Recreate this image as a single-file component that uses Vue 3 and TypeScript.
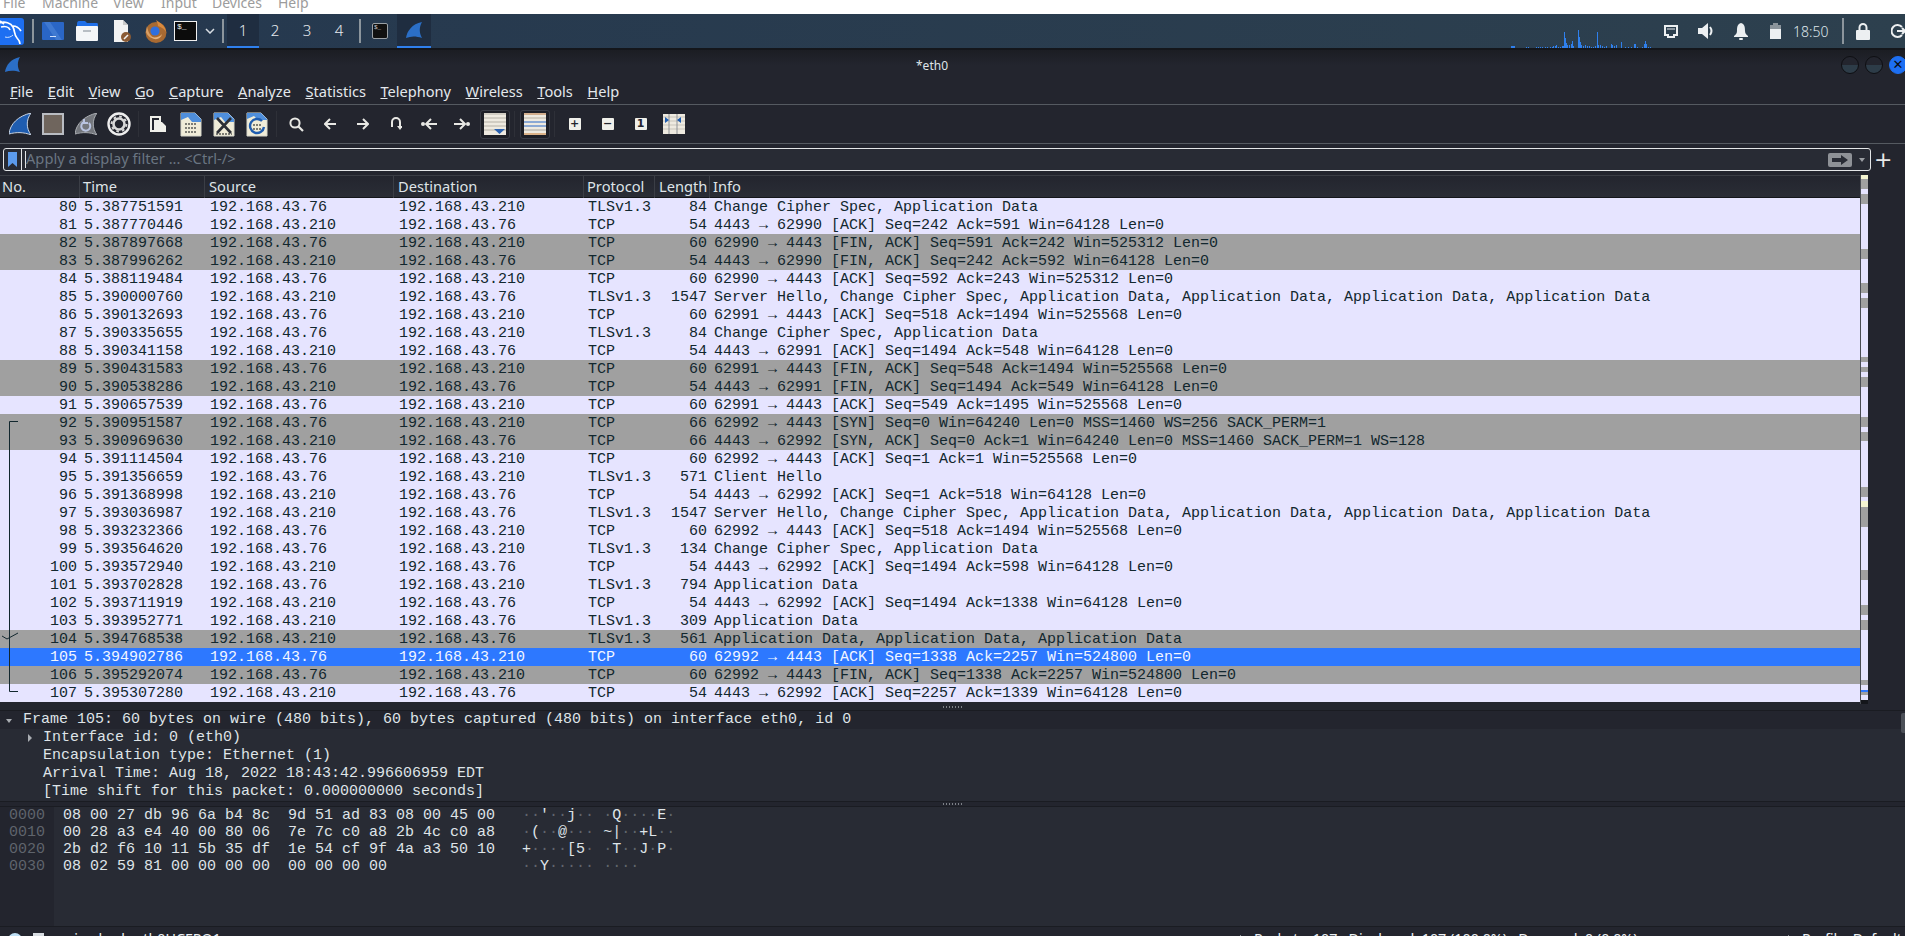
<script setup lang="ts">
interface Packet {
  no: string
  time: string
  source: string
  destination: string
  protocol: string
  length: string
  info: string
  kind: string
}

const NET = '192.168.43.'
const rawRows = [
  '80|5.387751591|76|210|TLSv1.3|84|Change Cipher Spec, Application Data',
  '81|5.387770446|210|76|TCP|54|4443 → 62990 [ACK] Seq=242 Ack=591 Win=64128 Len=0',
  '82|5.387897668|76|210|TCP|60|62990 → 4443 [FIN, ACK] Seq=591 Ack=242 Win=525312 Len=0',
  '83|5.387996262|210|76|TCP|54|4443 → 62990 [FIN, ACK] Seq=242 Ack=592 Win=64128 Len=0',
  '84|5.388119484|76|210|TCP|60|62990 → 4443 [ACK] Seq=592 Ack=243 Win=525312 Len=0',
  '85|5.390000760|210|76|TLSv1.3|1547|Server Hello, Change Cipher Spec, Application Data, Application Data, Application Data, Application Data',
  '86|5.390132693|76|210|TCP|60|62991 → 4443 [ACK] Seq=518 Ack=1494 Win=525568 Len=0',
  '87|5.390335655|76|210|TLSv1.3|84|Change Cipher Spec, Application Data',
  '88|5.390341158|210|76|TCP|54|4443 → 62991 [ACK] Seq=1494 Ack=548 Win=64128 Len=0',
  '89|5.390431583|76|210|TCP|60|62991 → 4443 [FIN, ACK] Seq=548 Ack=1494 Win=525568 Len=0',
  '90|5.390538286|210|76|TCP|54|4443 → 62991 [FIN, ACK] Seq=1494 Ack=549 Win=64128 Len=0',
  '91|5.390657539|76|210|TCP|60|62991 → 4443 [ACK] Seq=549 Ack=1495 Win=525568 Len=0',
  '92|5.390951587|76|210|TCP|66|62992 → 4443 [SYN] Seq=0 Win=64240 Len=0 MSS=1460 WS=256 SACK_PERM=1',
  '93|5.390969630|210|76|TCP|66|4443 → 62992 [SYN, ACK] Seq=0 Ack=1 Win=64240 Len=0 MSS=1460 SACK_PERM=1 WS=128',
  '94|5.391114504|76|210|TCP|60|62992 → 4443 [ACK] Seq=1 Ack=1 Win=525568 Len=0',
  '95|5.391356659|76|210|TLSv1.3|571|Client Hello',
  '96|5.391368998|210|76|TCP|54|4443 → 62992 [ACK] Seq=1 Ack=518 Win=64128 Len=0',
  '97|5.393036987|210|76|TLSv1.3|1547|Server Hello, Change Cipher Spec, Application Data, Application Data, Application Data, Application Data',
  '98|5.393232366|76|210|TCP|60|62992 → 4443 [ACK] Seq=518 Ack=1494 Win=525568 Len=0',
  '99|5.393564620|76|210|TLSv1.3|134|Change Cipher Spec, Application Data',
  '100|5.393572940|210|76|TCP|54|4443 → 62992 [ACK] Seq=1494 Ack=598 Win=64128 Len=0',
  '101|5.393702828|76|210|TLSv1.3|794|Application Data',
  '102|5.393711919|210|76|TCP|54|4443 → 62992 [ACK] Seq=1494 Ack=1338 Win=64128 Len=0',
  '103|5.393952771|210|76|TLSv1.3|309|Application Data',
  '104|5.394768538|210|76|TLSv1.3|561|Application Data, Application Data, Application Data',
  '105|5.394902786|76|210|TCP|60|62992 → 4443 [ACK] Seq=1338 Ack=2257 Win=524800 Len=0',
  '106|5.395292074|76|210|TCP|60|62992 → 4443 [FIN, ACK] Seq=1338 Ack=2257 Win=524800 Len=0',
  '107|5.395307280|210|76|TCP|54|4443 → 62992 [ACK] Seq=2257 Ack=1339 Win=64128 Len=0',
]

const greyRows = ['82', '83', '89', '90', '92', '93', '104', '106']

const packets: Packet[] = rawRows.map((line) => {
  const [no, time, src, dst, protocol, length, info] = line.split('|')
  return {
    no,
    time,
    source: NET + src,
    destination: NET + dst,
    protocol,
    length,
    info,
    kind: no === '105' ? 'selected' : greyRows.includes(no) ? 'grey' : 'light',
  }
})

const menus = ['File', 'Edit', 'View', 'Go', 'Capture', 'Analyze', 'Statistics', 'Telephony', 'Wireless', 'Tools', 'Help']
const vmMenus = ['File', 'Machine', 'View', 'Input', 'Devices', 'Help']

// scrollbar minimap, [height, colour kind]
const minimap: [number, string][] = [
  [4, 'y'], [10, 'g'], [5, 'l'], [10, 'g'], [45, 'l'], [10, 'g'], [24, 'l'], [10, 'g'], [5, 'l'], [10, 'g'],
  [49, 'l'], [5, 'g'], [5, 'l'], [5, 'g'], [5, 'l'], [10, 'g'], [30, 'l'], [10, 'g'], [5, 'l'], [9, 'g'],
  [46, 'l'], [10, 'g'], [4, 'l'], [6, 'y'], [20, 'g'], [43, 'l'], [10, 'g'], [25, 'l'], [10, 'g'], [5, 'l'],
  [10, 'g'], [50, 'l'], [5, 'g'], [5, 'l'], [2, 'b'], [3, 'g'], [5, 'l'], [4, 'd'],
]

// network monitor bars, [x, height]
const netBars: [number, number][] = [
  [0, 2], [1, 2], [2, 2], [3, 2], [15, 1], [17, 1], [25, 1], [27, 1], [29, 1], [31, 1], [34, 1], [36, 1], [39, 1],
  [41, 1], [42, 2], [44, 2], [45, 3], [47, 1], [49, 1], [51, 2], [52, 2], [53, 16], [54, 10], [55, 5], [56, 3],
  [58, 3], [60, 4], [61, 7], [62, 2], [67, 18], [68, 11], [69, 6], [70, 3], [72, 2], [74, 3], [76, 2], [78, 2],
  [80, 1], [82, 1], [84, 2], [86, 16], [87, 3], [89, 3], [91, 2], [93, 1], [95, 2], [100, 4], [101, 3], [103, 2], [105, 3],
  [110, 6], [114, 1], [117, 1], [120, 1], [123, 4], [124, 4], [126, 1], [131, 1], [133, 4], [134, 7], [135, 4], [137, 1], [139, 1],
]

const hexRows = [
  { off: '0000', hex: '08 00 27 db 96 6a b4 8c  9d 51 ad 83 08 00 45 00', ascii: "··'··j·· ·Q····E·" },
  { off: '0010', hex: '00 28 a3 e4 40 00 80 06  7e 7c c0 a8 2b 4c c0 a8', ascii: '·(··@··· ~|··+L··' },
  { off: '0020', hex: '2b d2 f6 10 11 5b 35 df  1e 54 cf 9f 4a a3 50 10', ascii: '+····[5· ·T··J·P·' },
  { off: '0030', hex: '08 02 59 81 00 00 00 00  00 00 00 00', ascii: '··Y····· ····' },
]
</script>

<template>
  <div class="screen">
    <div class="vm-menu">
      <span v-for="m in vmMenus" :key="m" :class="'vm-' + m.toLowerCase()">{{ m }}</span>
    </div>

    <div class="panel">
      <div class="kali">
        <svg width="24" height="27" viewBox="0 0 24 27">
          <rect x="-6" y="0" width="30" height="27" rx="3" fill="#1d6ff2" />
          <path d="M-1 5 C5 3 11 5 13 9 C15 13 14 17 17 20 C19 22 20 24 20 26 M1 9 C5 8 9 9 10 12 M13 8 C16 8 19 10 21 13 M4 6 L0 3" fill="none" stroke="#fff" stroke-width="1.7" />
          <path d="M13 17 C11 19 8 20 5 19" fill="none" stroke="#cfe2ff" stroke-width="1" />
        </svg>
      </div>
      <i class="panel-sep first"></i>
      <svg class="ic-desktop" width="22" height="18" viewBox="0 0 22 18">
        <rect width="22" height="18" rx="1" fill="#2a66c6" />
        <path d="M8 0 L20 18 L14 18 L2 0Z" fill="#4f86d8" opacity=".6" />
        <rect x="8" y="14" width="6" height="1" fill="#cfe0fa" />
      </svg>
      <svg class="ic-folder" width="22" height="20" viewBox="0 0 22 20">
        <path d="M1 3 Q1 0 3 0 H9 L11 2 H21 Q22 2 22 4 V6 H1Z" fill="#1f6fe8" />
        <rect y="5" width="22" height="15" rx="1" fill="#f4f6f8" />
        <rect x="7" y="9" width="8" height="2" fill="#b8bec4" />
      </svg>
      <svg class="ic-editor" width="18" height="22" viewBox="0 0 18 22">
        <path d="M1 0 H10 L15 5 V22 H1Z" fill="#f2f2f2" />
        <path d="M10 0 L15 5 H10Z" fill="#c9c9c9" />
        <circle cx="13" cy="17" r="5" fill="#8a5a34" />
        <path d="M11 19 L15 15" stroke="#f2f2f2" stroke-width="1.6" />
      </svg>
      <svg class="ic-firefox" width="22" height="23" viewBox="0 0 22 23">
        <circle cx="11" cy="12.5" r="10.5" fill="#a86a32" />
        <path d="M11 0 C16 3 21 7 21 12 C19 8 15 7 13 6 C13 4 12 2 11 0Z" fill="#d98a3d" />
        <path d="M2 6 C3 12 5 17 12 19 C7 19 3 17 1 12Z" fill="#d9a066" />
        <circle cx="10" cy="11" r="4.6" fill="#2f6fde" />
        <path d="M6 17 C10 21 16 19 17 14 C15 17 10 18 6 17Z" fill="#e7b27a" />
      </svg>
      <div class="ic-term">$_</div>
      <svg class="ic-chevron" width="10" height="6" viewBox="0 0 10 6">
        <path d="M1 1 L5 5 L9 1" fill="none" stroke="#d8dde2" stroke-width="1.5" />
      </svg>
      <i class="panel-sep second"></i>
      <div class="workspaces">
        <span class="ws active">1</span>
        <span class="ws">2</span>
        <span class="ws">3</span>
        <span class="ws">4</span>
      </div>
      <i class="panel-sep third"></i>
      <div class="task-term"><span>$_</span></div>
      <div class="task-shark">
        <svg width="16" height="17" viewBox="0 0 16 17">
          <path d="M0 16 C1 9 6 2 16 0 C13 5 13 11 16 16 C10 14 5 14 0 16Z" fill="#2b6fc7" />
        </svg>
      </div>

      <div class="tray">
        <svg class="netgraph" width="141" height="20" viewBox="0 0 141 20">
          <rect v-for="b in netBars" :key="b[0]" :x="b[0]" :y="20 - b[1]" width="1" :height="b[1]" fill="#2f80ed" />
        </svg>
        <svg class="tray-net" width="14" height="13" viewBox="0 0 14 13">
          <path d="M1 1 H13 V10 H10 V12 H4 V10 H1Z" fill="none" stroke="#eceff1" stroke-width="2" />
          <path d="M4 3 V5 M6 3 V5 M8 3 V5 M10 3 V5" stroke="#eceff1" />
        </svg>
        <svg class="tray-vol" width="18" height="18" viewBox="0 0 18 18">
          <path d="M0 6 H4 L10 1 V17 L4 12 H0Z" fill="#eceff1" />
          <path d="M12 5 Q15 9 12 13" fill="none" stroke="#eceff1" stroke-width="2" />
        </svg>
        <svg class="tray-bell" width="14" height="17" viewBox="0 0 14 17">
          <path d="M7 0 C11 1 11 5 11 8 C11 11 13 12 14 13 V14 H0 V13 C1 12 3 11 3 8 C3 5 3 1 7 0Z" fill="#eceff1" />
          <rect x="5" y="15" width="4" height="2" rx="1" fill="#eceff1" />
        </svg>
        <svg class="tray-bat" width="11" height="16" viewBox="0 0 11 16">
          <rect x="3" y="0" width="5" height="2" fill="#8b949b" />
          <rect x="0" y="2" width="11" height="14" fill="#8b949b" />
          <rect x="0" y="6" width="11" height="10" fill="#eceff1" />
        </svg>
        <span class="clock">18:50</span>
        <i class="panel-sep tray-sep"></i>
        <svg class="tray-lock" width="14" height="17" viewBox="0 0 14 17">
          <path d="M3.5 8 V4.5 a3.5 3.5 0 0 1 7 0 V8" fill="none" stroke="#eceff1" stroke-width="2" />
          <rect y="7" width="14" height="10" rx="1" fill="#eceff1" />
        </svg>
        <svg class="tray-power" width="14" height="16" viewBox="0 0 14 16">
          <path d="M11 4 A6 6 0 1 0 11 12" fill="none" stroke="#eceff1" stroke-width="2" />
          <path d="M6 8 H14 M11 5 L14 8 L11 11" fill="none" stroke="#eceff1" stroke-width="2" />
        </svg>
      </div>
    </div>

    <div class="titlebar">
      <svg class="title-fin" width="15" height="16" viewBox="0 0 16 17">
        <path d="M0 16 C1 9 6 2 16 0 C13 5 13 11 16 16 C10 14 5 14 0 16Z" fill="#2b6fc7" />
      </svg>
      <span class="title-text">*eth0</span>
      <div class="win-btns">
        <i class="win-btn"></i>
        <i class="win-btn"></i>
        <i class="win-btn close">✕</i>
      </div>
    </div>

    <div class="menubar">
      <span v-for="m in menus" :key="m" class="menu-item"><u>{{ m[0] }}</u>{{ m.slice(1) }}</span>
    </div>

    <div class="toolbar">
      <span class="tool">
        <svg width="22" height="22" viewBox="0 0 22 22">
          <path d="M0 21 C1 11 9 3 22 0 C17 7 17 15 22 22 C15 19 7 19 0 21Z" fill="#1f5db0" stroke="#c8d4e4" />
        </svg>
      </span>
      <span class="tool">
        <svg width="22" height="22" viewBox="0 0 22 22">
          <rect x="1" y="1" width="20" height="20" fill="#6f655d" stroke="#b9bcc2" stroke-width="2" />
        </svg>
      </span>
      <span class="tool">
        <svg width="22" height="22" viewBox="0 0 22 22">
          <path d="M0 21 C1 11 9 3 22 0 C17 7 17 15 22 22 C15 19 7 19 0 21Z" fill="#74777d" stroke="#a9acb1" />
          <path d="M14 10 A4.5 4.5 0 1 1 9 9 M9 6 V10 H13" fill="none" stroke="#b9c3e0" stroke-width="2" />
        </svg>
      </span>
      <span class="tool">
        <svg width="24" height="24" viewBox="0 0 24 24">
          <circle cx="12" cy="12" r="10.5" fill="#23252e" stroke="#eeeeee" stroke-width="2.4" />
          <circle cx="12" cy="12" r="5.5" fill="none" stroke="#d8d8d8" stroke-width="2.6" />
          <circle cx="12" cy="12" r="7.4" fill="none" stroke="#d8d8d8" stroke-width="2" stroke-dasharray="2.6 3.2" />
        </svg>
      </span>
      <i class="tool-sep narrow"></i>
      <span class="tool">
        <svg width="16" height="16" viewBox="0 0 16 16">
          <path d="M1 1 H10 V5 H5 V15 H1Z" fill="none" stroke="#f0f0ea" stroke-width="2" />
          <path d="M6 6 H12 L16 10 V16 H6Z" fill="#f0f0ea" />
        </svg>
      </span>
      <span class="tool">
        <svg width="22" height="25" viewBox="0 0 22 25">
          <path d="M1 1 H15 L21 7 V24 H1Z" fill="#f0ecd8" stroke="#d8d8cc" />
          <path d="M1 1 H15 L21 7 V10 H12 L8 5 L1 8Z" fill="#4f8fdc" />
          <path d="M5 12 H17 M5 16 H17 M5 20 H17" stroke="#7d7d75" stroke-width="2" stroke-dasharray="2 1" />
        </svg>
      </span>
      <span class="tool">
        <svg width="22" height="25" viewBox="0 0 22 25">
          <path d="M1 1 H15 L21 7 V24 H1Z" fill="#f0ecd8" stroke="#d8d8cc" />
          <path d="M1 1 H15 L21 7 V10 H12 L8 5 L1 8Z" fill="#4f8fdc" />
          <path d="M3 22 H19" stroke="#7d7d75" stroke-width="2" stroke-dasharray="2 1" />
          <path d="M4 6 L18 21 M18 6 L4 21" stroke="#2c2f36" stroke-width="2.6" />
        </svg>
      </span>
      <span class="tool">
        <svg width="22" height="25" viewBox="0 0 22 25">
          <path d="M1 1 H15 L21 7 V24 H1Z" fill="#f0ecd8" stroke="#d8d8cc" />
          <path d="M1 1 H15 L21 7 V8 H12 L8 4 L1 7Z" fill="#4f8fdc" />
          <path d="M7 13 H15 M7 17 H15" stroke="#7d7d75" stroke-width="2" stroke-dasharray="2 1" />
          <path d="M16 9 A7 7 0 1 0 18 15" fill="none" stroke="#1f5db0" stroke-width="2.4" />
        </svg>
      </span>
      <i class="tool-sep"></i>
      <span class="tool">
        <svg width="15" height="15" viewBox="0 0 15 15">
          <circle cx="6" cy="6" r="4.6" fill="none" stroke="#e8e8e4" stroke-width="2" />
          <path d="M9.5 9.5 L14 14" stroke="#e8e8e4" stroke-width="2.2" />
        </svg>
      </span>
      <span class="tool">
        <svg width="12" height="12" viewBox="0 0 12 12">
          <path d="M6 1 L1 6 L6 11 M1 6 H12" fill="none" stroke="#e8e8e4" stroke-width="2" />
        </svg>
      </span>
      <span class="tool">
        <svg width="12" height="12" viewBox="0 0 12 12">
          <path d="M6 1 L11 6 L6 11 M0 6 H11" fill="none" stroke="#e8e8e4" stroke-width="2" />
        </svg>
      </span>
      <span class="tool">
        <svg width="12" height="14" viewBox="0 0 12 14">
          <path d="M2 10 V5 A4 4 0 0 1 10 5 V9" fill="none" stroke="#e8e8e4" stroke-width="2" />
          <path d="M7 9 H13 L10 13Z" fill="#e8e8e4" />
        </svg>
      </span>
      <span class="tool">
        <svg width="16" height="12" viewBox="0 0 16 12">
          <circle cx="2" cy="6" r="2" fill="#e8e8e4" />
          <path d="M10 1 L5 6 L10 11 M5 6 H16" fill="none" stroke="#e8e8e4" stroke-width="2" />
        </svg>
      </span>
      <span class="tool">
        <svg width="16" height="12" viewBox="0 0 16 12">
          <path d="M6 1 L11 6 L6 11 M0 6 H11" fill="none" stroke="#e8e8e4" stroke-width="2" />
          <circle cx="14" cy="6" r="2" fill="#e8e8e4" />
        </svg>
      </span>
      <span class="tool">
        <span class="toggled">
          <svg width="22" height="22" viewBox="0 0 22 22">
            <rect width="22" height="22" fill="#eeeae0" />
            <path d="M0 1 H22 M0 5 H22 M0 9 H22 M0 13 H22 M0 17 H22" stroke="#b4b0a6" />
            <path d="M10 16 H21 L15.5 21Z" fill="#2b62b0" />
          </svg>
        </span>
      </span>
      <i class="tool-sep"></i>
      <span class="tool">
        <span class="toggled">
          <svg width="22" height="22" viewBox="0 0 22 22">
            <rect width="22" height="22" fill="#eeeae0" />
            <path d="M0 1 H22" stroke="#b8743a" />
            <path d="M0 5 H22" stroke="#b8b0a0" />
            <path d="M0 9 H22 M0 13 H22" stroke="#2868c8" />
            <path d="M0 17 H22" stroke="#a8a6a0" />
            <path d="M0 21 H22" stroke="#c87a30" />
          </svg>
        </span>
      </span>
      <i class="tool-sep"></i>
      <span class="tool"><span class="zoom-btn">+</span></span>
      <span class="tool"><span class="zoom-btn">−</span></span>
      <span class="tool"><span class="zoom-btn">1</span></span>
      <span class="tool">
        <svg width="22" height="20" viewBox="0 0 22 20">
          <rect width="22" height="20" fill="#eeeae0" />
          <path d="M0 3 H22 M0 7 H22 M0 11 H22 M0 15 H22" stroke="#c8c4ba" />
          <path d="M6 0 V20 M14 0 V20" stroke="#8f9296" />
          <path d="M2 3 L6 6 L2 9Z M18 3 L14 6 L18 9Z" fill="#1f5db0" />
        </svg>
      </span>
    </div>

    <div class="filter-row">
      <div class="filter">
        <span class="bookmark">
          <svg width="9" height="15" viewBox="0 0 9 15"><path d="M0 0 H9 V15 L4.5 11 L0 15Z" fill="#5c9bec" /></svg>
        </span>
        <i class="caret"></i>
        <span class="placeholder">Apply a display filter ... &lt;Ctrl-/&gt;</span>
        <span class="apply">
          <svg width="16" height="10" viewBox="0 0 16 10"><path d="M0 3 H9 V0 L16 5 L9 10 V7 H0Z" fill="#282b34" /></svg>
        </span>
        <i class="drop"></i>
      </div>
      <span class="plus">+</span>
    </div>

    <div class="list-area">
      <div class="list">
        <div class="list-head">
          <span class="c-no">No.</span>
          <span class="c-time">Time</span>
          <span class="c-src">Source</span>
          <span class="c-dst">Destination</span>
          <span class="c-proto">Protocol</span>
          <span class="c-len">Length</span>
          <span class="c-info">Info</span>
        </div>
        <div class="rows">
          <div v-for="p in packets" :key="p.no" class="row" :class="p.kind">
            <span class="c-no">{{ p.no }}</span>
            <span class="c-time">{{ p.time }}</span>
            <span class="c-src">{{ p.source }}</span>
            <span class="c-dst">{{ p.destination }}</span>
            <span class="c-proto">{{ p.protocol }}</span>
            <span class="c-len">{{ p.length }}</span>
            <span class="c-info">{{ p.info }}</span>
          </div>
          <svg class="related" width="20" height="280" viewBox="0 0 20 280">
            <path d="M18 1.5 H9.5 V271.5 H18" fill="none" stroke="#12272e" />
            <path d="M2 216 L7 219 L18 213" fill="none" stroke="#12272e" />
          </svg>
        </div>
      </div>
      <div class="minimap">
        <i v-for="(m, i) in minimap" :key="i" :class="'mm-' + m[1]" :style="{ height: m[0] + 'px' }"></i>
      </div>
    </div>

    <div class="splitter"><i></i></div>

    <div class="details">
      <div class="d-line d-current"><i class="tri-down"></i>Frame 105: 60 bytes on wire (480 bits), 60 bytes captured (480 bits) on interface eth0, id 0</div>
      <div class="d-line d-sub"><i class="tri-right"></i>Interface id: 0 (eth0)</div>
      <div class="d-line d-sub">Encapsulation type: Ethernet (1)</div>
      <div class="d-line d-sub">Arrival Time: Aug 18, 2022 18:43:42.996606959 EDT</div>
      <div class="d-line d-sub">[Time shift for this packet: 0.000000000 seconds]</div>
      <i class="d-scroll"></i>
    </div>

    <div class="splitter short"><i></i></div>

    <div class="hexpane">
      <div class="offsets">
        <div v-for="r in hexRows" :key="r.off">{{ r.off }}</div>
      </div>
      <div class="hexbytes">
        <div v-for="r in hexRows" :key="r.off">{{ r.hex }}</div>
      </div>
      <div class="ascii">
        <div v-for="r in hexRows" :key="r.off">
          <span v-for="(c, i) in r.ascii" :key="i" :class="{ dim: c === '·' }">{{ c }}</span>
        </div>
      </div>
    </div>

    <div class="statusbar">
      <i class="st-dot"></i>
      <i class="st-note"></i>
      <span class="st-file">wireshark_eth0UCEPQ1.pcapng</span>
      <i class="st-sep one"></i>
      <span class="st-counts">Packets: 107 · Displayed: 107 (100.0%) · Dropped: 0 (0.0%)</span>
      <i class="st-sep two"></i>
      <span class="st-profile">Profile: Default</span>
    </div>
  </div>
</template>

<style scoped>
.screen {
  width: 1905px;
  height: 936px;
  overflow: hidden;
  display: flex;
  flex-direction: column;
  background: #23252e;
  color: #dfe4e8;
  font-family: "Noto Sans", sans-serif;
}

/* virtualbox menu, mostly cut off by the capture */
.vm-menu {
  flex: 0 0 14px;
  height: 14px;
  background: #fff;
  overflow: hidden;
  position: relative;
  font: 14px/14px "Noto Sans", sans-serif;
  color: #9c9c9c;
}
.vm-menu span {
  position: absolute;
  top: -4px;
}
.vm-file { left: 3px; }
.vm-machine { left: 42px; }
.vm-view { left: 113px; }
.vm-input { left: 161px; }
.vm-devices { left: 212px; }
.vm-help { left: 278px; }

.panel {
  flex: 0 0 34px;
  height: 34px;
  display: flex;
  align-items: center;
  background: linear-gradient(90deg, #25384f, #2d404e);
  border-bottom: 2px solid #14161b;
  box-sizing: content-box;
  overflow: hidden;
}
.kali {
  flex: 0 0 24px;
  height: 27px;
  display: flex;
}
.panel-sep {
  flex: 0 0 2px;
  height: 24px;
  background: #8c959c;
}
.panel-sep.first { margin-left: 8px; }
.panel-sep.second { margin-left: 7px; }
.panel-sep.third { margin-left: 4px; }
.ic-desktop { margin-left: 8px; }
.ic-folder { margin-left: 12px; }
.ic-editor { margin-left: 15px; }
.ic-firefox { margin-left: 14px; }
.ic-term {
  margin-left: 7px;
  height: 18px;
  border: 1px solid #f0f0f0;
  background: #0c0c0c;
  color: #eee;
  font: 8px/10px "Liberation Mono", monospace;
  padding-left: 2px;
  box-sizing: content-box;
  flex: none;
  width: 19px;
}
.ic-chevron { margin-left: 8px; }
.workspaces {
  display: flex;
  margin-left: 3px;
  align-self: stretch;
}
.ws {
  width: 32px;
  display: flex;
  align-items: center;
  justify-content: center;
  font-size: 15px;
  font-weight: 300;
  color: #e6ebef;
  box-sizing: border-box;
  border-bottom: 2px solid transparent;
}
.ws.active {
  background: #1f2d40;
  border-bottom-color: #2f80ed;
}
.task-term {
  margin-left: 11px;
  width: 16px;
  height: 16px;
  background: #111;
  border: 1px solid #9aa0a5;
  border-radius: 2px;
  font: 6px/8px "Liberation Mono", monospace;
  box-sizing: border-box;
  padding-left: 1px;
  color: #ddd;
}
.task-term span { display: block; }
.task-shark {
  margin-left: 9px;
  width: 34px;
  align-self: stretch;
  background: #1f2d40;
  border-bottom: 2px solid #2f80ed;
  display: flex;
  align-items: center;
  justify-content: center;
  box-sizing: border-box;
}
.tray {
  margin-left: auto;
  display: flex;
  align-items: center;
  align-self: stretch;
  flex: none;
}
.netgraph {
  align-self: flex-end;
}
.tray-net { margin-left: 12px; }
.tray-vol { margin-left: 20px; }
.tray-bell { margin-left: 18px; }
.tray-bat { margin-left: 22px; }
.clock {
  margin-left: 12px;
  width: 36px;
  font-size: 14px;
  font-weight: 300;
  color: #dfe6ea;
}
.tray-sep {
  margin-left: 13px;
  height: 26px;
  width: 2px;
}
.tray-lock { margin-left: 12px; }
.tray-power { margin-left: 21px; flex: none; }

.titlebar {
  flex: 0 0 30px;
  display: flex;
  align-items: center;
  position: relative;
  background: linear-gradient(#1b1d23, #23252e 50%);
}
.title-fin { margin-left: 5px; }
.title-text {
  position: absolute;
  left: 0;
  right: 0;
  text-align: center;
  padding-right: 41px;
  box-sizing: border-box;
  font-size: 12px;
  color: #dfe4e8;
}
.win-btns {
  margin-left: auto;
  display: flex;
  gap: 6px;
  margin-right: -2px;
}
.win-btn {
  width: 18px;
  height: 18px;
  border-radius: 50%;
  border: 1px solid #0e0f13;
  background: linear-gradient(#23252e 50%, #2d3c48 50%);
  box-sizing: border-box;
  font-style: normal;
}
.win-btn.close {
  background: #1d6ff2;
  border-color: #1d6ff2;
  color: #0a0c10;
  font: bold 13px/16px "DejaVu Sans", sans-serif;
  text-align: center;
}

.menubar {
  flex: 0 0 24px;
  display: flex;
  align-items: center;
  padding-left: 10px;
  padding-bottom: 2px;
  box-sizing: border-box;
  font-size: 14.6px;
  color: #e3e8ec;
}
.menu-item { margin-right: 14.5px; }

.toolbar {
  flex: 0 0 38px;
  display: flex;
  align-items: center;
  padding-left: 3px;
  border-top: 1px solid #555a61;
  border-bottom: 1px solid #555a61;
}
.tool {
  flex: 0 0 33px;
  height: 38px;
  display: flex;
  align-items: center;
  justify-content: center;
}
.tool-sep {
  flex: 0 0 7px;
  height: 26px;
  background: linear-gradient(#2e3038, #2e3038) center / 1px 100% no-repeat;
}
.tool-sep.narrow { flex-basis: 6px; }
.toggled {
  width: 30px;
  height: 29px;
  display: flex;
  align-items: center;
  justify-content: center;
  border: 1px solid #3a3d46;
  border-radius: 3px;
  background: #1d1f26;
  box-sizing: border-box;
}
.zoom-btn {
  width: 12px;
  height: 12px;
  background: #f0f0ea;
  color: #23252e;
  font: bold 11px/12px "DejaVu Sans", sans-serif;
  text-align: center;
  border-radius: 1px;
}

.filter-row {
  flex: 0 0 31px;
  display: flex;
  align-items: center;
  padding-left: 3px;
}
.filter {
  width: 1868px;
  height: 23px;
  flex: none;
  display: flex;
  align-items: center;
  border: 1px solid #e4e6e8;
  border-radius: 3px;
  background: #282b34;
  box-sizing: border-box;
}
.bookmark {
  flex: 0 0 17px;
  align-self: stretch;
  display: flex;
  align-items: center;
  justify-content: center;
  border-right: 1px solid #e4e6e8;
}
.caret {
  width: 1px;
  height: 17px;
  background: #dfe4e8;
  margin-left: 3px;
}
.placeholder {
  font-size: 14.67px;
  line-height: 18px;
  padding-bottom: 3px;
  color: #6a7582;
}
.apply {
  margin-left: auto;
  width: 24px;
  height: 14px;
  border-radius: 2px;
  background: #8e9196;
  display: flex;
  align-items: center;
  justify-content: center;
}
.drop {
  margin: 0 5px 0 7px;
  border: 3.5px solid transparent;
  border-top: 4px solid #9a9da2;
  border-bottom: 0;
}
.plus {
  margin-left: 3px;
  width: 18px;
  font: 22px/22px "DejaVu Sans", sans-serif;
  color: #e8e8e8;
  text-align: center;
}

.list-area {
  flex: 0 0 527px;
  display: flex;
}
.list {
  width: 1860px;
  flex: none;
}
.list-head {
  height: 23px;
  display: flex;
  align-items: center;
  box-sizing: border-box;
  background: linear-gradient(#23252e, #2a2d36);
  border-top: 1px solid #3a3d44;
  border-bottom: 1px solid #14161b;
  font-size: 14.67px;
}
.list-head span {
  height: 22px;
  line-height: 20px;
  border-right: 1px solid #3b3e46;
  box-sizing: border-box;
}
.list-head .c-no { text-align: left; padding: 0 0 0 2px; }
.list-head .c-len { text-align: left; padding: 0 0 0 4px; }
.list-head .c-info { border-right: 0; padding-left: 3px; }
.list-head .c-time,
.list-head .c-proto { padding-left: 3px; }
.list-head .c-src,
.list-head .c-dst { padding-left: 4px; }

.rows {
  position: relative;
  font: 15px/20px "Liberation Mono", monospace;
  white-space: pre;
}
.row {
  height: 18px;
  display: flex;
  background: #e6e4ff;
  color: #12272e;
}
.row.grey { background: #a0a0a0; }
.row.selected {
  background: #2d78ff;
  color: #f2f6ff;
}
.c-no { flex: 0 0 80px; text-align: right; padding-right: 3px; box-sizing: border-box; }
.c-time { flex: 0 0 125px; padding-left: 4px; box-sizing: border-box; }
.c-src { flex: 0 0 189px; padding-left: 5px; box-sizing: border-box; }
.c-dst { flex: 0 0 190px; padding-left: 5px; box-sizing: border-box; }
.c-proto { flex: 0 0 71px; padding-left: 4px; box-sizing: border-box; }
.c-len { flex: 0 0 55px; text-align: right; padding-right: 3px; box-sizing: border-box; }
.c-info { flex: 1 1 0; padding-left: 4px; box-sizing: border-box; }
.related {
  position: absolute;
  left: 0;
  top: 222px;
}
.minimap {
  flex: 0 0 8px;
  display: flex;
  flex-direction: column;
  border-left: 1px solid #4a4d54;
  box-sizing: border-box;
}
.minimap i { display: block; flex: none; }
.mm-y { background: #f5f5d2; }
.mm-g { background: #a0a0a0; }
.mm-l { background: #e6e4ff; }
.mm-b { background: #2d78ff; }
.mm-d { background: #14161b; }

.splitter {
  flex: 0 0 7px;
  display: flex;
  align-items: center;
  justify-content: center;
  background: #23252e;
  border-bottom: 1px solid #1a1c22;
  box-sizing: border-box;
}
.splitter.short { flex-basis: 6px; border-top: 1px solid #1a1c22; }
.splitter i {
  width: 19px;
  height: 2px;
  background: repeating-linear-gradient(90deg, #7d8187 0 1px, transparent 1px 3px);
}

.details {
  flex: 0 0 90px;
  position: relative;
  background: #282b34;
  font: 15px/18px "Liberation Mono", monospace;
  white-space: pre;
  overflow: hidden;
}
.d-line {
  height: 18px;
  color: #dfe4e8;
  position: relative;
}
.d-current {
  background: #23252e;
  padding-left: 23px;
}
.d-sub { padding-left: 43px; }
.tri-down {
  position: absolute;
  left: 6px;
  top: 8px;
  border: 3.5px solid transparent;
  border-top: 4px solid #a9adb2;
  border-bottom: 0;
}
.tri-right {
  position: absolute;
  left: 28px;
  top: 5px;
  border: 4px solid transparent;
  border-left: 4px solid #a9adb2;
  border-right: 0;
}
.d-scroll {
  position: absolute;
  right: 0;
  top: 2px;
  width: 4px;
  height: 20px;
  border-radius: 2px 0 0 2px;
  background: #4c5058;
}

.hexpane {
  flex: 0 0 119px;
  display: flex;
  background: #282b34;
  font: 15px/17px "Liberation Mono", monospace;
  white-space: pre;
  overflow: hidden;
}
.offsets {
  flex: 0 0 54px;
  padding-left: 9px;
  box-sizing: border-box;
  background: #23252e;
  color: #5f646c;
}
.hexbytes {
  flex: 0 0 459px;
  padding-left: 9px;
  box-sizing: border-box;
  color: #dfe4e8;
}
.ascii {
  padding-left: 9px;
  color: #dfe4e8;
}
.ascii .dim { color: #60656d; }

.statusbar {
  flex: 0 0 12px;
  position: relative;
  overflow: hidden;
  background: #23252e;
  border-top: 1px solid #1a1c22;
  box-sizing: border-box;
  font-size: 14.3px;
  line-height: 18px;
  color: #eef2f5;
}
.statusbar span {
  position: absolute;
  top: 3px;
}
.st-file { left: 63px; }
.st-counts { left: 1254px; }
.st-profile { left: 1802px; }
.st-dot {
  position: absolute;
  left: 8px;
  top: 6px;
  width: 14px;
  height: 14px;
  border-radius: 50%;
  background: #bfe0f5;
}
.st-note {
  position: absolute;
  left: 33px;
  top: 6px;
  width: 11px;
  height: 12px;
  background: #d8dde2;
}
.st-sep {
  position: absolute;
  top: 8px;
  width: 1px;
  height: 10px;
  background: repeating-linear-gradient(#8c9096 0 1px, transparent 1px 3px);
}
.st-sep.one { left: 1240px; }
.st-sep.two { left: 1788px; }
</style>

<style>
html,
body {
  margin: 0;
  background: #23252e;
  overflow: hidden;
}
</style>
